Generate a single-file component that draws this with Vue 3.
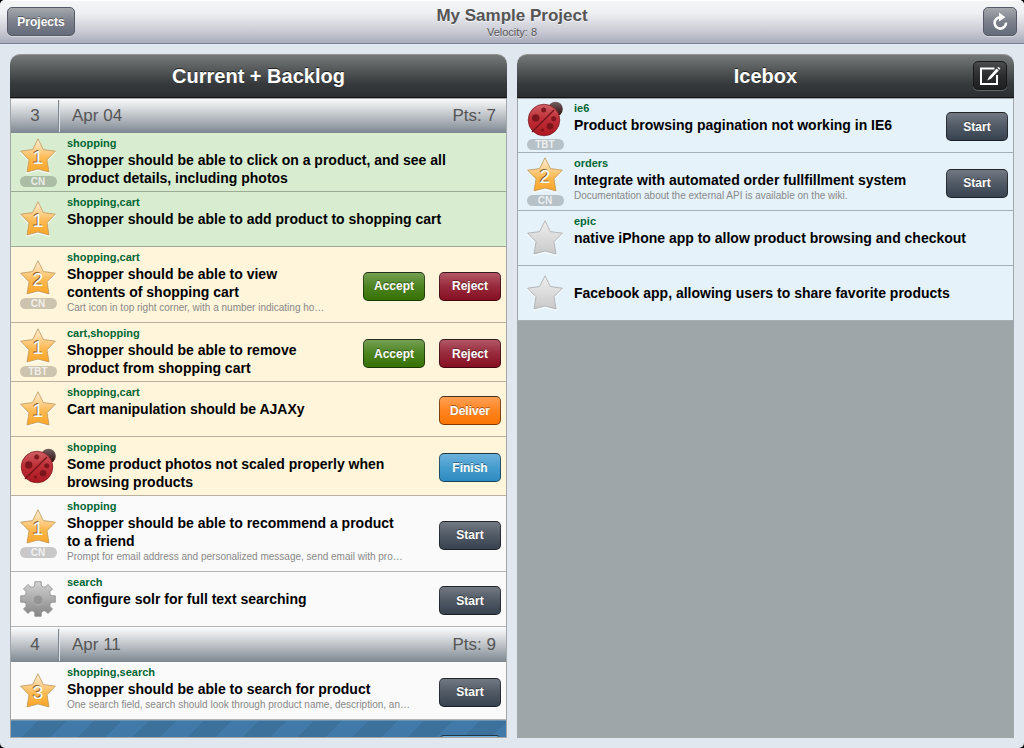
<script setup>
const iterations = [
  {
    number: 3,
    date: 'Apr 04',
    points: 7,
    stories: [
      { icon: 'star', points: 1, owner: 'CN', labels: 'shopping', title: 'Shopper should be able to click on a product, and see all product details, including photos', state: 'accepted', actions: [] },
      { icon: 'star', points: 1, labels: 'shopping,cart', title: 'Shopper should be able to add product to shopping cart', state: 'accepted', actions: [] },
      { icon: 'star', points: 2, owner: 'CN', labels: 'shopping,cart', title: 'Shopper should be able to view contents of shopping cart', note: 'Cart icon in top right corner, with a number indicating ho…', state: 'started', actions: ['Accept', 'Reject'] },
      { icon: 'star', points: 1, owner: 'TBT', labels: 'cart,shopping', title: 'Shopper should be able to remove product from shopping cart', state: 'started', actions: ['Accept', 'Reject'] },
      { icon: 'star', points: 1, labels: 'shopping,cart', title: 'Cart manipulation should be AJAXy', state: 'started', actions: ['Deliver'] },
      { icon: 'bug', labels: 'shopping', title: 'Some product photos not scaled properly when browsing products', state: 'started', actions: ['Finish'] },
      { icon: 'star', points: 1, owner: 'CN', labels: 'shopping', title: 'Shopper should be able to recommend a product to a friend', note: 'Prompt for email address and personalized message, send email with pro…', state: 'planned', actions: ['Start'] },
      { icon: 'gear', labels: 'search', title: 'configure solr for full text searching', state: 'planned', actions: ['Start'] },
    ],
  },
  {
    number: 4,
    date: 'Apr 11',
    points: 9,
    stories: [
      { icon: 'star', points: 3, labels: 'shopping,search', title: 'Shopper should be able to search for product', note: 'One search field, search should look through product name, description, an…', state: 'planned', actions: ['Start'] },
    ],
  },
]

const icebox = [
  { icon: 'bug', owner: 'TBT', labels: 'ie6', title: 'Product browsing pagination not working in IE6', state: 'iced', actions: ['Start'] },
  { icon: 'star', points: 2, owner: 'CN', labels: 'orders', title: 'Integrate with automated order fullfillment system', note: 'Documentation about the external API is available on the wiki.', state: 'iced', actions: ['Start'] },
  { icon: 'star', labels: 'epic', title: 'native iPhone app to allow product browsing and checkout', state: 'iced', actions: [] },
  { icon: 'star', title: 'Facebook app, allowing users to share favorite products', state: 'iced', actions: [] },
]

const panels = [
  { title: 'Current + Backlog', groups: iterations, more: true },
  { title: 'Icebox', groups: [{ stories: icebox }], compose: true },
]

const starPath = 'M18 0.8 L23.4 11.6 L35.4 13.2 L27 21.8 L29 34 L18 31 L7 34 L9 21.8 L0.6 13.2 L12.6 11.6 Z'

const gearPath = (() => {
  const points = []
  for (let i = 0; i < 8; i++) {
    const a = (i * Math.PI) / 4
    for (const [r, w] of [[12.5, -4.2], [14, -3.2], [17.3, -3.2], [17.3, 3.2], [14, 3.2], [12.5, 4.2]]) {
      const x = 18 + r * Math.cos(a) - w * Math.sin(a)
      const y = 18 + r * Math.sin(a) + w * Math.cos(a)
      points.push(`${x.toFixed(2)} ${y.toFixed(2)}`)
    }
  }
  return `M${points.join('L')}Z`
})()
</script>

<template>
  <div class="app">
    <svg class="defs" width="0" height="0" aria-hidden="true">
      <defs>
        <linearGradient id="gold" x1="0" y1="0" x2="0" y2="1">
          <stop offset="0" stop-color="#fff0d8" />
          <stop offset="0.35" stop-color="#fdd08c" />
          <stop offset="0.6" stop-color="#fcb84f" />
          <stop offset="1" stop-color="#fba526" />
        </linearGradient>
        <linearGradient id="silver" x1="0" y1="0" x2="0" y2="1">
          <stop offset="0" stop-color="#efefef" />
          <stop offset="1" stop-color="#c9c9c9" />
        </linearGradient>
        <linearGradient id="steel" x1="0" y1="0" x2="0" y2="1">
          <stop offset="0" stop-color="#d2d2d2" />
          <stop offset="1" stop-color="#858585" />
        </linearGradient>
        <linearGradient id="shell" x1="0" y1="0" x2="0" y2="1">
          <stop offset="0" stop-color="#cf6065" />
          <stop offset="0.45" stop-color="#c03038" />
          <stop offset="1" stop-color="#ac1620" />
        </linearGradient>
        <linearGradient id="head" x1="0" y1="0" x2="0" y2="1">
          <stop offset="0" stop-color="#75605f" />
          <stop offset="1" stop-color="#2c0a0c" />
        </linearGradient>
      </defs>
    </svg>

    <header class="topbar">
      <button type="button" class="bar-button">Projects</button>
      <div class="heading">
        <h1>My Sample Project</h1>
        <p>Velocity: 8</p>
      </div>
      <button type="button" class="bar-button refresh" aria-label="Refresh">
        <svg width="18" height="20" viewBox="0 0 18 20">
          <path d="M9 5.2 A5.7 5.7 0 1 0 15 10.6" fill="none" stroke="#fff" stroke-width="2.6" />
          <path d="M8 0.6 L14.4 5.2 L8 9.6 Z" fill="#fff" />
        </svg>
      </button>
    </header>

    <main class="board">
      <section v-for="panel in panels" :key="panel.title" class="panel">
        <header class="panel-head">
          <h2>{{ panel.title }}</h2>
          <button v-if="panel.compose" type="button" class="compose" aria-label="New story">
            <svg width="22" height="20" viewBox="0 0 22 20">
              <path d="M15.5 2.5 H2 V18 H18 V9" fill="none" stroke="#fff" stroke-width="2" />
              <path d="M8.2 14.6 L10 11 L17.6 2.6 L19.8 4.6 L12 12.8 Z" fill="#fff" />
              <path d="M18.4 1.8 L19.4 0.8 L21.4 2.8 L20.5 3.8 Z" fill="#fff" />
            </svg>
          </button>
        </header>
        <div class="panel-body">
          <template v-for="(group, g) in panel.groups" :key="g">
            <div v-if="group.number" class="iteration">
              <span class="iteration-number">{{ group.number }}</span>
              <span class="iteration-date">{{ group.date }}</span>
              <span>Pts: {{ group.points }}</span>
            </div>
            <article v-for="story in group.stories" :key="story.title" class="story" :class="story.state">
              <div class="marker">
                <svg v-if="story.icon === 'star'" width="36" height="36" viewBox="0 0 36 36" aria-hidden="true">
                  <path :d="starPath" fill="none" stroke="#fff" stroke-opacity="0.75" stroke-width="1.6" transform="translate(0 1)" />
                  <path :d="starPath" :fill="story.points ? 'url(#gold)' : 'url(#silver)'" :stroke="story.points ? '#c09a5c' : '#a9adb0'" stroke-opacity="0.85" stroke-width="1" />
                  <template v-if="story.points">
                    <text x="17" y="25" class="digit digit-shade">{{ story.points }}</text>
                    <text x="18" y="26" class="digit">{{ story.points }}</text>
                  </template>
                </svg>
                <svg v-else-if="story.icon === 'bug'" width="36" height="36" viewBox="0 0 36 36" aria-hidden="true">
                  <circle cx="28.5" cy="8" r="7.3" fill="url(#head)" />
                  <circle cx="17" cy="19" r="15.8" fill="url(#shell)" stroke="#76191e" stroke-opacity="0.7" />
                  <path d="M5 31 L27 9" stroke="#6e1318" stroke-width="1.3" />
                  <g fill="#6e1318" fill-opacity="0.85">
                    <circle cx="8.7" cy="17" r="3.7" />
                    <circle cx="16.7" cy="9" r="2.5" />
                    <circle cx="26.7" cy="17.7" r="2.5" />
                    <circle cx="23" cy="25.3" r="3.3" />
                    <circle cx="15.5" cy="29" r="1.5" />
                  </g>
                </svg>
                <svg v-else width="36" height="36" viewBox="0 0 36 36" aria-hidden="true">
                  <path :d="gearPath" fill="url(#steel)" stroke="#8c8c8c" stroke-width="0.8" />
                  <circle cx="18" cy="19" r="5" fill="#949494" stroke="#b4b4b4" />
                </svg>
                <span v-if="story.owner" class="owner">{{ story.owner }}</span>
              </div>
              <div class="text">
                <p v-if="story.labels" class="labels">{{ story.labels }}</p>
                <h3>{{ story.title }}</h3>
                <p v-if="story.note" class="note">{{ story.note }}</p>
              </div>
              <div v-if="story.actions.length" class="actions">
                <button v-for="action in story.actions" :key="action" type="button" class="action" :class="action.toLowerCase()">{{ action }}</button>
              </div>
            </article>
          </template>
          <div v-if="panel.more" class="story release">
            <div class="actions">
              <button type="button" class="action finish" aria-label="Finish release"></button>
            </div>
          </div>
        </div>
      </section>
    </main>
  </div>
</template>

<style>
html,
body {
  background: #000;
}
</style>

<style scoped>
.app {
  display: flex;
  flex-direction: column;
  height: 100vh;
  overflow: hidden;
  border-radius: 5px;
  background: #e0e7ee;
  font-family: "Liberation Sans", Arial, sans-serif;
  color: #000;
}
.app *,
.app {
  box-sizing: border-box;
}
.defs {
  position: absolute;
}
h1,
h2,
h3,
p {
  margin: 0;
}
button {
  padding: 0;
  font-family: inherit;
  font-weight: bold;
  font-size: 12px;
  color: #fff;
}
.topbar {
  display: grid;
  grid-template-columns: 1fr auto 1fr;
  align-items: center;
  flex: none;
  height: 44px;
  padding: 0 7px 1px;
  border-top: 1px solid #fff;
  border-bottom: 1px solid #7b8094;
  background: linear-gradient(#f4f5f7, #eeeff2 30%, #c9cad4 72%, #a9acbc);
}
.bar-button {
  justify-self: start;
  width: 68px;
  height: 29px;
  border: 1px solid #555a66;
  border-radius: 5px;
  background: linear-gradient(#a5a8ae, #7b808b 50%, #666c7a);
  box-shadow: 0 1px 0 rgba(255, 255, 255, 0.4);
  text-shadow: 0 -1px 0 rgba(0, 0, 0, 0.4);
}
.refresh {
  display: grid;
  place-items: center;
  justify-self: end;
  width: 34px;
}
.heading {
  text-align: center;
  color: #555;
  text-shadow: 0 1px 0 rgba(255, 255, 255, 0.6);
}
.heading h1 {
  font-size: 17px;
  line-height: 20px;
}
.heading p {
  font-size: 11px;
  line-height: 12px;
}
.board {
  display: grid;
  grid-template-columns: 1fr 1fr;
  grid-template-rows: 100%;
  gap: 10px;
  flex: 1;
  min-height: 0;
  padding: 10px;
}
.panel {
  display: flex;
  flex-direction: column;
  min-width: 0;
  min-height: 0;
}
.panel-head {
  position: relative;
  z-index: 1;
  display: grid;
  grid-template-columns: 1fr auto 1fr;
  align-items: center;
  flex: none;
  height: 44px;
  padding: 0 7px 1px;
  border-top: 1px solid #929494;
  border-bottom: 1px solid #101213;
  border-radius: 10px 10px 0 0;
  background: linear-gradient(#767979, #4c4f50 45%, #36393b 70%, #2c2f31);
  box-shadow: 0 1px 0 #a5a8aa;
}
.panel-head h2 {
  grid-column: 2;
  font-size: 20px;
  line-height: 24px;
  color: #fff;
  text-shadow: 0 -1px 0 rgba(0, 0, 0, 0.6);
}
.compose {
  display: grid;
  place-items: center;
  justify-self: end;
  width: 34px;
  height: 29px;
  border: 1px solid #161819;
  border-radius: 5px;
  background: linear-gradient(#4a4c4d, #2b2d2e 50%, #1d1f20);
  box-shadow: 0 1px 0 rgba(255, 255, 255, 0.25);
}
.panel-body {
  flex: 1;
  min-height: 0;
  overflow: hidden;
  border: 1px solid #a3a6a8;
  border-top: 0;
  background: #9fa6a9;
}
.iteration {
  display: flex;
  align-items: center;
  height: 35px;
  padding: 1px 10px 0 0;
  background: linear-gradient(#fdfdfd, #bfc4c9 50%, #7d8791);
  color: #555;
  font-size: 17px;
  line-height: 32px;
}
.iteration-number {
  width: 49px;
  border-right: 1px solid #dfe3e6;
  box-shadow: inset -1px 0 0 #7d8791;
  text-align: center;
}
.iteration-date {
  flex: 1;
  padding-left: 12px;
}
.story {
  display: flex;
  align-items: center;
  min-height: 55px;
  border-bottom: 1px solid rgba(0, 0, 0, 0.28);
  padding-right: 5px;
}
.accepted {
  background: #d8edd0;
}
.started {
  background: #fff5db;
}
.planned {
  background: #fafafa;
}
.iced {
  background: #e5f2fa;
}
.release {
  justify-content: flex-end;
  height: 56px;
  border-top: 1px solid #6b94b3;
  background: repeating-linear-gradient(135deg, #4179a8 0 19px, #3b719b 19px 39px);
}
.marker {
  display: flex;
  flex-direction: column;
  align-items: center;
  gap: 2px;
  flex: none;
  width: 54px;
}
.marker svg {
  display: block;
}
.digit {
  fill: #fff;
  font-size: 19px;
  text-anchor: middle;
}
.digit-shade {
  fill: #6b4a1c;
  fill-opacity: 0.8;
}
.owner {
  width: 37px;
  height: 11px;
  border-radius: 6px;
  background: rgba(0, 0, 0, 0.2);
  color: rgba(255, 255, 255, 0.75);
  font-size: 10px;
  font-weight: bold;
  line-height: 11px;
  text-align: center;
}
.text {
  flex: 1;
  align-self: center;
  min-width: 0;
  padding: 3px 0 4px 2px;
}
.labels {
  margin-bottom: 1px;
  color: #006633;
  font-size: 11px;
  font-weight: bold;
  line-height: 14px;
}
.text h3 {
  padding-right: 20px;
  font-size: 14px;
  line-height: 18px;
}
.text:has(.labels) {
  align-self: flex-start;
}
.note {
  margin-bottom: 3px;
  color: #888;
  font-size: 10px;
  line-height: 14px;
  white-space: nowrap;
}
.actions {
  display: flex;
  gap: 14px;
  flex: none;
  margin: 3px 0 0 14px;
}
.action {
  width: 62px;
  height: 29px;
  border: 1px solid rgba(0, 0, 0, 0.5);
  border-top-color: rgba(0, 0, 0, 0.7);
  border-radius: 5px;
  background-clip: border-box;
  background-origin: border-box;
  text-shadow: 0 -1px 0 rgba(0, 0, 0, 0.4);
}
.start {
  background-image: linear-gradient(#757c86, #535c67 45%, #36414e);
}
.accept {
  background-image: linear-gradient(#77a256, #4c8420 50%, #347003);
}
.reject {
  background-image: linear-gradient(#b35a68, #982a3c 50%, #840e20);
}
.deliver {
  background-image: linear-gradient(#ffa35a, #ff8420 50%, #fb7402);
}
.finish {
  background-image: linear-gradient(#70b4dc, #459cce 50%, #2d89bf);
}
</style>
